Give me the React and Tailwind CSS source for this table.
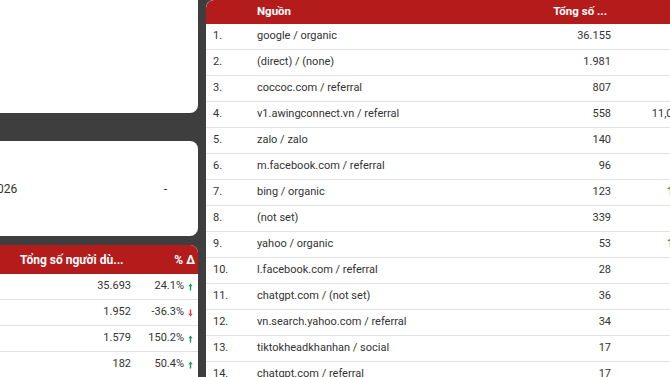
import React from "react";

const rows = [
  ["1.", "google / organic", "36.155", "22.9%", true],
  ["2.", "(direct) / (none)", "1.981", "-8.2%", false],
  ["3.", "coccoc.com / referral", "807", "45.1%", true],
  ["4.", "v1.awingconnect.vn / referral", "558", "11,060.0%", true],
  ["5.", "zalo / zalo", "140", "-6.7%", false],
  ["6.", "m.facebook.com / referral", "96", "77.8%", true],
  ["7.", "bing / organic", "123", "1,025%", true],
  ["8.", "(not set)", "339", "-4.8%", false],
  ["9.", "yahoo / organic", "53", "1,200%", true],
  ["10.", "l.facebook.com / referral", "28", "-9.7%", false],
  ["11.", "chatgpt.com / (not set)", "36", "33.3%", true],
  ["12.", "vn.search.yahoo.com / referral", "34", "-5.6%", false],
  ["13.", "tiktokheadkhanhan / social", "17", "41.7%", true],
  ["14.", "chatgpt.com / referral", "17", "70.0%", true],
];

const leftRows = [
  ["35.693", "24.1%", true],
  ["1.952", "-36.3%", false],
  ["1.579", "150.2%", true],
  ["182", "50.4%", true],
];

function Arrow({ up }) {
  return up ? (
    <svg width="5" height="8" viewBox="0 0 5 8" className="ml-[4px] shrink-0">
      <path d="M2.5 0.5 L4.6 3.2 H3.2 V7.5 H1.8 V3.2 H0.4 Z" fill="#0f9d58" />
    </svg>
  ) : (
    <svg width="5" height="8" viewBox="0 0 5 8" className="ml-[4px] shrink-0">
      <path d="M2.5 7.5 L4.6 4.8 H3.2 V0.5 H1.8 V4.8 H0.4 Z" fill="#e53935" />
    </svg>
  );
}

export default function App() {
  return (
    <div
      className="w-[670px] h-[377px] overflow-hidden bg-[#3e3e3e] flex text-[#333]"
      style={{ fontFamily: "Roboto, 'Liberation Sans', sans-serif" }}
    >
      {/* Left column */}
      <div className="w-[198px] shrink-0 flex flex-col">
        <div className="h-[113px] shrink-0 bg-white rounded-br-[8px]" />
        <div className="mt-[28px] h-[95px] shrink-0 bg-white rounded-r-[8px] flex items-center justify-between pr-[31px] text-[12px] text-[#333]">
          <span className="-ml-[3px]">026</span>
          <span>-</span>
        </div>
        <div className="mt-[9px] flex-1 bg-white rounded-tr-[8px] flex flex-col text-[11px]">
          <div className="h-[29px] bg-[#b41c1c] rounded-tr-[8px] flex items-center text-white font-bold text-[12px] shrink-0">
            <span className="ml-[20px] w-[110px]">Tổng số người dù...</span>
            <span className="ml-auto mr-[3px]">% Δ</span>
          </div>
          {leftRows.map(([v, p, up], i) => (
            <div
              key={i}
              className="h-[26px] shrink-0 flex items-center border-b border-[#e2e2e2] text-[#333]"
            >
              <span className="w-[131px] text-right">{v}</span>
              <span className="ml-auto flex items-center mr-[5px]">
                {p}
                <Arrow up={up} />
              </span>
            </div>
          ))}
        </div>
      </div>

      {/* Right table */}
      <div className="ml-[8px] flex-1 min-w-0 bg-white rounded-tl-[8px] flex flex-col text-[11px] overflow-hidden">
        <div className="h-[24px] shrink-0 bg-[#b41c1c] rounded-tl-[8px] flex items-center text-white font-bold text-[11.5px] whitespace-nowrap">
          <span className="w-[51px] shrink-0" />
          <span className="w-[240px] shrink-0">Nguồn</span>
          <span className="w-[120px] shrink-0 text-right pr-[10px]">Tổng số ...</span>
          <span className="w-[103px] shrink-0" />
        </div>
        {rows.map(([n, s, v, p, up], i) => (
          <div
            key={i}
            className="h-[26px] shrink-0 flex items-center border-b border-[#e2e2e2] whitespace-nowrap"
          >
            <span className="w-[51px] shrink-0 pl-[7px]">{n}</span>
            <span className="w-[240px] shrink-0">{s}</span>
            <span className="w-[120px] shrink-0 text-right pr-[6px]">{v}</span>
            <span className="w-[103px] shrink-0 flex justify-end items-center pr-[9px]">
              {p}
              <Arrow up={up} />
            </span>
          </div>
        ))}
      </div>
    </div>
  );
}
